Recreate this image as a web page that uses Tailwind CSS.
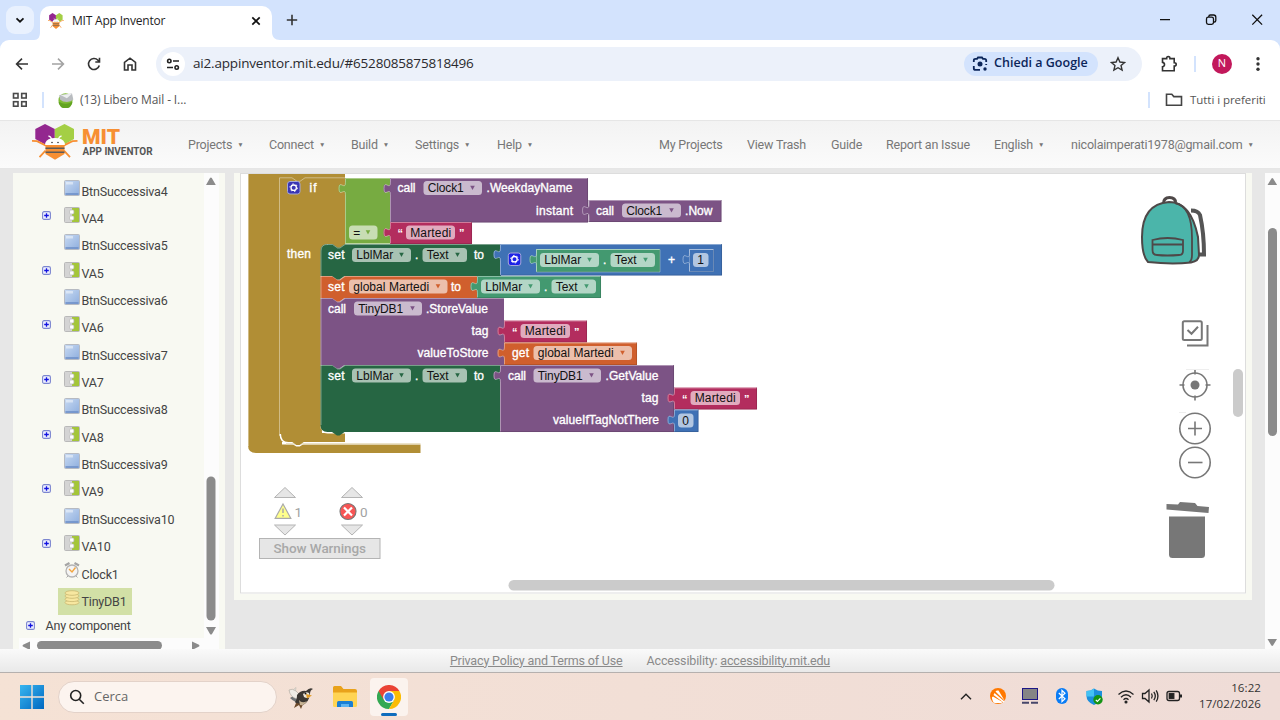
<!DOCTYPE html>
<html lang="it">
<head>
<meta charset="utf-8">
<title>MIT App Inventor</title>
<script src="https://cdn.jsdelivr.net/npm/@tailwindcss/browser@4"></script>
</head>
<body class="h-[720px] w-[1280px] overflow-hidden bg-white">
<div class="flex h-[720px] w-[1280px] flex-col overflow-hidden font-['Open_Sans','Noto_Sans',sans-serif]">

  <!-- Tab strip -->
  <div class="flex h-10 shrink-0 items-end bg-[#d3e3fd]">
    <div class="mb-1.5 ml-1.5 flex h-7 w-7 items-center justify-center rounded-[9px] bg-[#e9f1fe]">
      <svg class="h-3 w-3" viewBox="0 0 12 12" fill="none" stroke="#111" stroke-width="1.7"><path d="M2.5 4.3 6 7.7l3.5-3.4"/></svg>
    </div>
    <svg class="h-2 w-1.5 shrink-0" viewBox="0 0 6 8"><path d="M6 0v8H0c4 0 6-3 6-8z" fill="#fff"/></svg>
    <div class="flex h-[34px] w-[232px] items-center rounded-t-[10px] bg-white pb-[4px] pl-2">
      <svg class="h-4 w-4" viewBox="0 0 46 36" preserveAspectRatio="none"><use href="#bee"/></svg>
      <span class="ml-2 whitespace-nowrap text-[12px] tracking-[-0.2px] text-[#1f1f1f]">MIT App Inventor</span>
      <svg class="mr-[11px] ml-auto h-[10px] w-[10px]" viewBox="0 0 10 10" stroke="#111" stroke-width="1.7"><path d="M1.3 1.3l7.4 7.4M8.7 1.3 1.3 8.7"/></svg>
    </div>
    <svg class="h-2 w-2 shrink-0" viewBox="0 0 8 8"><path d="M0 0v8h8C3 8 0 5 0 0z" fill="#fff"/></svg>
    <svg class="mb-[14px] ml-[6px] h-3 w-3" viewBox="0 0 12 12" stroke="#333" stroke-width="1.6"><path d="M6 .8v10.4M.8 6h10.4"/></svg>
    <svg class="mr-[15px] mb-[13px] ml-auto h-[14px] w-[106px]" viewBox="1159 13 106 14" fill="none" stroke="#111" stroke-width="1.3"><path d="M1160 19.6h10M1252.300 14.800l9.800 9.800M1262.100 14.800l-9.800 9.800"/><rect x="1206.500" y="17.200" width="7" height="7.200" rx="1.800"/><path d="M1208.800 17v-.4q0-1.600 1.600-1.600h3.200q2.200 0 2.200 2.200v3.200q0 1.600-1.600 1.600h-.4"/></svg>
  </div>

  <!-- Toolbar -->
  <div class="bg-[#d3e3fd]">
  <div class="flex h-[47px] items-center rounded-t-[9px] bg-white">
    <svg class="ml-[15px] h-4 w-[14px]" viewBox="0 0 14 16" fill="none" stroke="#333" stroke-width="1.6"><path d="M13 8H2M7 2.600 1.600 8 7 13.400"/></svg>
    <svg class="ml-[22px] h-4 w-[14px]" viewBox="0 0 14 16" fill="none" stroke="#a3a3a3" stroke-width="1.6"><path d="M1 8h11M7 2.600 12.400 8 7 13.400"/></svg>
    <svg class="ml-[22px] h-4 w-[14px]" viewBox="0 0 14 16" fill="none" stroke="#333" stroke-width="1.6"><path d="M12.300 9.500A5.500 5.500 0 1 1 11 4.200l1.300 1.400M12.500 1.800v4.200H8.300"/></svg>
    <svg class="ml-[22px] h-4 w-[14px]" viewBox="0 0 14 16" fill="none" stroke="#333" stroke-width="1.6"><path d="M1.500 6.300 7 2.200l5.500 4.100V14H9V9H5v5H1.500z"/></svg>
    <div class="ml-[19px] flex h-[34px] w-[986px] items-center rounded-full bg-[#ecf1fa] pl-[5px]">
      <div class="flex h-6 w-6 items-center justify-center rounded-full bg-white">
        <svg class="h-3.5 w-3.5" viewBox="0 0 14 14" fill="none" stroke="#222" stroke-width="1.6"><circle cx="3.300" cy="4" r="1.700"/><path d="M7 4h6M1 10.500h6"/><circle cx="10.700" cy="10.500" r="1.700"/></svg>
      </div>
      <span class="ml-2 pb-px whitespace-nowrap text-[13.5px] tracking-[-0.18px] text-[#2a2a2e]">ai2.appinventor.mit.edu/#6528085875818496</span>
      <div class="ml-auto flex h-6 w-[134px] items-center rounded-full bg-[#d3e3fd] pl-2">
        <svg class="h-4 w-4" viewBox="0 0 16 16" fill="none" stroke="#0b2559" stroke-width="1.800"><path d="M1.800 6V4.500q0-1.700 1.700-1.700h1.600L6 1.500h4l.9 1.300h1.600q1.700 0 1.700 1.700V6M1.800 10v2.200q0 1.700 1.700 1.700H8M14.200 8v1"/><circle cx="8" cy="8" r="2.500" fill="#0b2559" stroke="none"/><circle cx="13" cy="13" r="1.700" fill="#0b2559" stroke="none"/></svg>
        <span class="ml-[6px] whitespace-nowrap text-[12.5px] font-semibold tracking-[0.02px] text-[#0b2559]">Chiedi a Google</span>
      </div>
      <svg class="mr-4 ml-3 h-4 w-4 shrink-0" viewBox="0 0 16 16" fill="none" stroke="#333" stroke-width="1.400"><path d="M8 1.700l1.900 4.300 4.700.45-3.550 3.100 1.050 4.600L8 11.700l-4.100 2.450 1.050-4.600L1.400 6.450 6.100 6z"/></svg>
    </div>
    <svg class="ml-[18px] h-[18px] w-[18px]" viewBox="0 0 18 18" fill="none" stroke="#333" stroke-width="1.600"><path d="M2.500 3.600h4.200q-.2-2 1.600-2t1.600 2h4.300v4.200q2 0 2 1.600t-2 1.600V15.800H2.500V11.800q2-.2 2-2.200t-2-2.200z"/></svg>
    <div class="ml-4 h-4 w-[2px] bg-[#d3e3fd]"></div>
    <div class="ml-[16px] flex h-5 w-5 items-center justify-center rounded-full bg-[#c2185b] text-[11px] text-white">N</div>
    <svg class="ml-[24px] h-4 w-1 " viewBox="0 0 4 16" fill="#333"><circle cx="2" cy="2.700" r="1.700"/><circle cx="2" cy="8" r="1.700"/><circle cx="2" cy="13.300" r="1.700"/></svg>
  </div>
  </div>

  <!-- Bookmarks -->
  <div class="flex h-[33px] shrink-0 items-center bg-white pb-[7px] text-[12px] text-[#555]">
    <svg class="ml-3 h-4 w-4" viewBox="0 0 16 16" fill="none" stroke="#4a4a4a" stroke-width="1.600"><rect x="1.500" y="1.500" width="4.500" height="4.500"/><rect x="9.700" y="1.500" width="4.500" height="4.500"/><rect x="1.500" y="9.700" width="4.500" height="4.500"/><rect x="9.700" y="9.700" width="4.500" height="4.500"/></svg>
    <div class="ml-[14px] h-4 w-[2px] bg-[#d3e3fd]"></div>
    <svg class="ml-[14px] h-4 w-4" viewBox="0 0 16 16"><circle cx="7.500" cy="8.300" r="7" fill="#7fbb35"/><path d="M.5 9.500q7 4.500 14 0A7 7 0 0 1 .5 9.500z" fill="#62a420"/><path d="M1.300 3 14 1.500 15.300 7.500Q12 11 5 9.500L2 7.500z" fill="#b9bcc0"/><path d="m2.500 3 6.400 3.300L14 1.700z" fill="#eceef0"/></svg>
    <span class="ml-[6px] whitespace-nowrap text-[12px] tracking-[-0.12px]">(13) Libero Mail - I...</span>
    <div class="ml-auto h-4 w-[2px] bg-[#d3e3fd]"></div>
    <svg class="ml-[15px] h-4 w-[18px]" viewBox="0 0 18 16" fill="none" stroke="#444" stroke-width="1.600"><path d="M1.500 13.300V2.300h5.300l2 2.300h7.700v8.700z"/></svg>
    <span class="mr-[14px] ml-[7px] w-[76px] whitespace-nowrap text-[11.5px] tracking-[-0.05px]">Tutti i preferiti</span>
  </div>

  <!-- App Inventor header -->
  <div class="flex h-[49px] shrink-0 items-center border-t border-b border-[#e6e6e6] bg-linear-to-b from-[#f3f3f3] to-[#fbfbfb] font-[Roboto,sans-serif] text-[12.5px] tracking-[-0.2px] whitespace-nowrap text-[#777]">
    <svg class="mb-1.5 ml-8 h-9 w-[46px] shrink-0" viewBox="0 0 46 36">
      <g id="bee">
        <path d="M3.300 5 13 0l9.800 5v10L13 20.500 3.300 15z" fill="#93278f"/>
        <path d="M22.800 5 32.500 0l9.500 5v10l-9.500 5.500L22.800 15z" fill="#a4cf45"/>
        <path d="M0 16.800l5 .3 9 4.500M45.500 16.800l-5 .3-9 4.500M7.500 33.200l6-6.500M38 33.200l-6-6.500" fill="none" stroke="#f78f33" stroke-width="1.800"/>
        <path d="M13.500 20H32.500V30L23 35.800 13.500 30z" fill="#f78f33"/>
        <path d="M13.200 21V19q2-5 9.800-5t9.800 5v2z" fill="#fff"/>
        <path d="M19.500 15q-.5-2.500-3-3M26.500 15q.5-2.500 3-3" fill="none" stroke="#fff" stroke-width="1.300"/>
        <circle cx="20" cy="18.500" r=".8" fill="#333"/><circle cx="26" cy="18.500" r=".8" fill="#333"/>
        <path d="M13.500 24.200h19M13.500 28.300h19" stroke="#5b5b5b" stroke-width="1.500"/>
      </g>
    </svg>
    <svg class="ml-[4px] h-[44px] w-[74px] shrink-0 overflow-visible" viewBox="82 122 74 44" font-family="Roboto" font-weight="700" letter-spacing="0"><text x="82" y="142.500" font-size="20" font-weight="900" fill="#f78f33" textLength="38" lengthAdjust="spacingAndGlyphs">MIT</text><text x="82.500" y="154" font-size="10.300" fill="#555" textLength="70" lengthAdjust="spacingAndGlyphs">APP INVENTOR</text></svg>
    <div class="ml-[32px] flex pt-[2px]">
      <span class="flex w-[81px] items-center gap-[5px]">Projects <i class="text-[6.5px] not-italic">▼</i></span>
      <span class="flex w-[82px] items-center gap-[5px]">Connect <i class="text-[6.5px] not-italic">▼</i></span>
      <span class="flex w-[64px] items-center gap-[5px]">Build <i class="text-[6.5px] not-italic">▼</i></span>
      <span class="flex w-[82px] items-center gap-[5px]">Settings <i class="text-[6.5px] not-italic">▼</i></span>
      <span class="flex w-[162px] items-center gap-[5px]">Help <i class="text-[6.5px] not-italic">▼</i></span>
      <span class="w-[88px]">My Projects</span>
      <span class="w-[84px]">View Trash</span>
      <span class="w-[55px]">Guide</span>
      <span class="w-[108px]">Report an Issue</span>
      <span class="flex w-[77px] items-center gap-[5px]">English <i class="text-[6.5px] not-italic">▼</i></span>
      <span class="flex items-center gap-[5px]">nicolaimperati1978@gmail.com <i class="text-[6.5px] not-italic">▼</i></span>
    </div>
  </div>

  <!-- Work area -->
  <div class="flex h-[480px] shrink-0 overflow-hidden bg-[#e7e7e7] pt-1">
    <!-- Component tree -->
    <div class="ml-[13px] flex h-[476px] w-[212px] shrink-0 flex-col bg-[#f8f9f2]">
      <div class="flex h-[465px] shrink-0">
        <div class="h-[465px] w-[191px] overflow-hidden pt-[4.400px] font-[Roboto,sans-serif] text-[12.5px] text-[#444]">
          <div id="tree"></div>
          <div class="flex h-[22px] items-center pl-[13px]"><svg class="h-[9px] w-[9px]" viewBox="0 0 9 9"><use href="#plus"/></svg><span class="ml-[10.500px] tracking-[-0.18px]">Any component</span></div>
        </div>
        <svg class="h-[465px] w-[15px] bg-[#fcfcfc]" viewBox="204 173 15 465" fill="#8b8b8b"><path d="M206 185l4-7q.9-1 1.800 0l4 7zM206 627h10l-4 7q-1 1-2 0z"/><rect x="206.500" y="476.500" width="9" height="144" rx="4.500"/></svg>
      </div>
      <svg class="ml-1.5 h-[11px] w-[200px] shrink-0 bg-[#fcfcfc]" viewBox="19 638 200 11" fill="#8b8b8b"><path d="M30 641.500v8.500l-7-3.400q-.8-.9 0-1.800zM192 641.500v8.500l7-3.400q.8-.9 0-1.800z"/><rect x="37" y="641" width="125" height="9" rx="4.500"/></svg>
    </div>
    <!-- Blocks workspace -->
    <div class="ml-[9px] h-[427px] w-[1018px] shrink-0 bg-[#f8f9f2] pl-[6px]">
      <svg id="ws" class="h-[421px] w-[1006px] bg-white" viewBox="240 173 1006 421" font-family="Liberation Sans"></svg>
    </div>
    <!-- Page scrollbar -->
    <svg class="ml-auto h-[476px] w-[15px] bg-[#fcfcfc]" viewBox="1265 173 15 476" fill="#8b8b8b"><path d="M1267.500 185l4-6.500q.8-.9 1.600 0l4 6.500zM1267.500 639h9.500l-4 6.500q-.8.900-1.600 0z"/><rect x="1268" y="228" width="9" height="208" rx="4.500"/></svg>
  </div>

  <!-- Footer -->
  <div class="flex h-[24px] shrink-0 items-center justify-center gap-6 border-b border-[#b5b0ae] bg-linear-to-b from-[#fafafa] to-[#e9e9e9] pt-px font-[Roboto,sans-serif] text-[12.5px] tracking-[-0.16px] text-[#8a8a8a]">
    <span class="underline">Privacy Policy and Terms of Use</span>
    <span>Accessibility: <span class="underline">accessibility.mit.edu</span></span>
  </div>

  <!-- Taskbar -->
  <div class="flex h-[47px] shrink-0 items-center bg-linear-to-r from-[#f5e2d5] to-[#efdcd7] text-[#333]">
    <svg class="ml-5 h-6 w-6" viewBox="0 0 24 24"><defs><linearGradient id="win" x1="0" y1="0" x2="1" y2="1"><stop offset="0" stop-color="#38b6f0"/><stop offset="1" stop-color="#0067c0"/></linearGradient></defs><path d="M0 0h11.300v11.300H0zM12.700 0H24v11.300H12.700zM0 12.700h11.300V24H0zM12.700 12.700H24V24H12.700z" fill="url(#win)"/></svg>
    <div class="ml-[14px] flex h-8 w-[219px] items-center rounded-full border border-[#e3d2c9] bg-[#fcf4ef] pl-[10px]">
      <svg class="h-4 w-4" viewBox="0 0 16 16" fill="none" stroke="#222" stroke-width="1.600"><circle cx="6.700" cy="6.500" r="5"/><path d="m10.200 10.200 4.600 4.600"/></svg>
      <span class="ml-[9px] text-[13px] text-[#666]">Cerca</span>
    </div>
    <svg class="ml-[10px] h-7 w-7" viewBox="0 0 28 28"><path d="M12 14q-6-2-9 1 5 5 11 5z" fill="#6f7477"/><path d="M9 13Q4 7 9 4.500q-2 6 5 7z" fill="#f4f2ee" stroke="#b7b1a8" stroke-width=".6"/><path d="M2 7q3-2 7 1l4 4-3 4Q3 14 2 7z" fill="#efece6" stroke="#aaa399" stroke-width=".6"/><path d="M10 12q4-5 9-4 4-4 7-2-3 1-3 5-1 8-7 11-5 1-8-3 2-2 2-7z" fill="#3a3632"/><path d="M16 11q3-3 6-1l1 4q-3 2-6 0z" fill="#eee6d8"/><path d="m19 11 6 1.500-5 3z" fill="#e09a25"/><circle cx="18.500" cy="10.500" r="1" fill="#111"/><path d="m9 20-2 5 5-3 2 4 2-5z" fill="#6d4a2a"/><path d="M12 17q3 4 8 1-3 5-7 4z" fill="#c7b394"/></svg>
    <svg class="ml-[17px] h-6 w-[26px]" viewBox="0 0 26 24"><path d="M1 2.500Q1 1 2.500 1H9l2.500 3H23q2 0 2 2v14H1z" fill="#e9a21b"/><path d="M1 7.500h24v13q0 1.500-1.500 1.500h-21Q1 22 1 20.500z" fill="#ffd454"/><path d="M5 17.500q0-1.500 1.500-1.500h13q1.500 0 1.500 1.500V22H5z" fill="#1a7fd4"/><path d="M9 19h8v3H9z" fill="#5db4f0"/></svg>
    <div class="relative ml-[12px] flex h-[38px] w-[38px] items-center justify-center rounded-[4px] bg-[#fbf3ee]">
      <svg class="h-6 w-6" viewBox="0 0 24 24"><path d="M12 12 1.600 6a12 12 0 0 0 10.400 18l5.200-9z" fill="#34a853"/><path d="M12 12V6h10.400A12 12 0 0 1 12 24l5.200-9z" fill="#fbbc05"/><path d="M12 12 6.800 15 1.600 6A12 12 0 0 1 22.400 6H12z" fill="#ea4335"/><circle cx="12" cy="12" r="5.900" fill="#fff"/><circle cx="12" cy="12" r="4.600" fill="#3b7ded"/></svg>
      <div class="absolute bottom-0 h-[3px] w-4 rounded-full bg-[#0f6cbd]"></div>
    </div>
    <svg class="mb-px ml-auto h-6 w-[224px]" viewBox="960 684 224 24" fill="none"><path d="m961 699.200 5-5 5 5" stroke="#222" stroke-width="1.400"/>
      <circle cx="998" cy="696" r="8" fill="#ff7800"/><path d="M992 698.500q-.5-1.500 1-2l9.500 5.500-1 1h-6.500q-2 0-3-4.500zM993.500 695l1-2 10 8.500-1 1zM995.500 691.500q1-1.500 3-1l6 10z" fill="#fff"/>
      <rect x="1022.500" y="688.500" width="15" height="11" fill="#858585" stroke="#1d1786" stroke-width="1"/><path d="M1022 702.700h7M1031 702.700h7" stroke="#46466a" stroke-width="2"/>
      <rect x="1056" y="688" width="12" height="16" rx="6" fill="#0a7cf5"/><path d="m1058.800 693 6.200 5.800-3 2.800v-11.200l3 2.800-6.200 5.800" stroke="#fff" stroke-width="1.200"/>
      <path d="M1094 688.500q3.500 2.500 8 2.500v5q0 6-8 9-7.500-3-7.500-9v-5q4.500 0 7.500-2.500z" fill="#1c8fdc"/><path d="M1094 688.500v8h-7.500V691q4.500 0 7.500-2.500z" fill="#43c2f3"/><circle cx="1098" cy="699.700" r="4.700" fill="#149414"/><path d="m1095.800 699.800 1.600 1.600 3-3" stroke="#fff" stroke-width="1.200"/>
      <g stroke="#222" stroke-width="1.300"><path d="M1118.500 694.500q7.500-7 15 0M1121 697.200q5-5 10 0M1123.500 699.700q2.500-2.500 5 0"/><circle cx="1126" cy="702" r=".9" fill="#222"/><path d="M1142.500 693.500h2.500l4-3.500v12l-4-3.500h-2.500zM1151.500 693.500q1.500 2.500 0 5M1153.800 691.800q3 4.200 0 8.400M1156.200 690.300q3.500 5.700 0 11.400"/><rect x="1167" y="691.500" width="12.500" height="9" rx="2"/><rect x="1169.300" y="693.700" width="4.500" height="4.600" fill="#222"/><path d="M1181 694.500v3" stroke-width="2"/></g>
    </svg>
    <div class="mr-[19px] mb-[2px] ml-[11px] w-[66px] text-right text-[11.500px] leading-4 tracking-[0.1px] whitespace-nowrap">16:22<br>17/02/2026</div>
  </div>
</div>

<svg class="absolute h-0 w-0">
  <defs>
    <linearGradient id="btnFill" x1="0" y1="0" x2="1" y2="1"><stop offset="0" stop-color="#c8daf2"/><stop offset="1" stop-color="#8eaede"/></linearGradient>
    <g id="plus"><rect x=".6" y=".6" width="7.800" height="7.800" rx="1.500" fill="#eef0ff" stroke="#7c86cf" stroke-width="1.100"/><path d="M4.500 2.200v4.600M2.200 4.500h4.600" stroke="#1212e0" stroke-width="1.300"/></g>
    <g id="btn"><rect x=".5" y=".5" width="15" height="15" rx="1" fill="url(#btnFill)" stroke="#b6bac2"/><path d="M1.500 14h13" stroke="#6f90c8" stroke-width="1.600"/><path d="M2 2h7v2.500H2z" fill="#fff" opacity=".45"/></g>
    <g id="va"><rect x=".5" y=".5" width="15" height="15" rx="1" fill="#d4d4d4" stroke="#b9b9b9"/><path d="M8 1h7v14H8z" fill="#a4c639"/><rect x="5.600" y="3" width="4.300" height="4" rx="1" fill="#fff" stroke="#b9b9b9" stroke-width=".7"/><rect x="5.600" y="9" width="4.300" height="4" rx="1" fill="#fff" stroke="#b9b9b9" stroke-width=".7"/></g>
    <g id="clock"><path d="M1 3.500 5.500 1M15 3.500 10.500 1" stroke="#a5a5a5" stroke-width="2.200"/><path d="m4 14-1.500 1.500M12 14l1.500 1.500" stroke="#aaa"/><circle cx="8" cy="9" r="6" fill="#f4f4f4" stroke="#b3b3b3" stroke-width="1.300"/><path d="m5 7 3 3 3.500-4.500" fill="none" stroke="#f2a640" stroke-width="1.400"/></g>
    <g id="db" fill="#f7e7a0" stroke="#c9b871" stroke-width=".8"><ellipse cx="8" cy="12.500" rx="7" ry="2.300"/><ellipse cx="8" cy="9.300" rx="7" ry="2.300"/><ellipse cx="8" cy="6" rx="7" ry="2.300"/><ellipse cx="8" cy="3" rx="7" ry="2.300"/></g>
  </defs>
</svg>

<script>
// Component tree
const tree = [];
for (let n = 4; n <= 10; n++) tree.push(['btn', 'BtnSuccessiva' + n], ['va', 'VA' + n]);
tree.push(['clock', 'Clock1'], ['db', 'TinyDB1']);
document.getElementById('tree').innerHTML = tree.map(([icon, label]) => `
  <div class="flex h-[27.350px] items-center pl-[29px]">
    <svg class="mb-[6px] h-[9px] w-[9px]" viewBox="0 0 9 9">${icon === 'va' ? '<use href="#plus"/>' : ''}</svg>
    <div class="${icon === 'db' ? 'ml-[7px] flex h-[27px] items-center bg-[#d2e0a6] pr-[5px] pl-[6px]' : 'ml-[7px] flex h-[27px] items-center pl-[6px]'}">
      <svg class="mb-[7px] h-4 w-4" viewBox="0 0 16 16"><use href="#${icon}"/></svg>
      <span class="ml-[1.500px] pt-[2px] tracking-[-0.18px] whitespace-nowrap">${label}</span>
    </div>
  </div>`).join('');

// Blocks
const GOLD = '#b18e35', LOGIC = '#77ab41', PURPLE = '#7c5385', PINK = '#b32d5e', DKGREEN = '#266643', BLUE = '#3f71b5', GREEN = '#439970', ORANGE = '#d05f2d';
const out = [];
const path = (d, fill, stroke = 'none', w = 1) => out.push(`<path d="${d}" fill="${fill}" stroke="${stroke}" stroke-width="${w}"/>`);
const light = 'rgba(255,255,255,.38)';
const tabUp = 'c0-8-6.500 3.500-6.500-6s6.500 2.500 6.500-6';
// value block with a puzzle tab on its left edge
function value(x, y, x2, y2, c) {
  path(`M${x} ${y}H${x2}V${y2}H${x}V${y + 16.5}${tabUp}z`, c);
  path(`M${x + .5} ${y2 - .5}V${y + 16.5}${tabUp}V${y + .5}H${x2 - .5}`, 'none', light);
  path(`M${x} ${y2 - .4}H${x2 - .4}V${y}`, 'none', 'rgba(0,0,0,.18)', .8);
}
// statement block, notch on the top edge and tooth underneath
function stmt(x, y, x2, y2, c, r = '', rb = 0) {
  path(`M${x} ${y + (r || 0)}${r ? `q0-${r} ${r}-${r}` : ''}H${x + 12}l5 3.500h2.500l5-3.500H${x2}V${y2}H${x + 24}l-5 3.500h-2.500l-5-3.500H${x + rb}${rb ? `q-${rb} 0-${rb}-${rb}` : ''}z`, c);
  path(`M${x + .5} ${y2 - rb}V${y + (r || 0)}${r ? `q0-${r} ${r}-${r - .5}` : ''}M${x + (r || 0)} ${y + .5}H${x + 12}l5 3.500h2.500l5-3.500H${x2}`, 'none', light);
}
function label(s, x, y, w) {
  out.push(`<text x="${x}" y="${y}" font-size="12" fill="#fff" stroke="#fff" stroke-width=".35" textLength="${w}">${s}</text>`);
}
function field(s, x, cy, x2, tw, arrow) {
  out.push(`<rect x="${x}" y="${cy - 7}" width="${x2 - x}" height="14" rx="3.500" fill="#fff" opacity=".6"/><text x="${x + 4.2}" y="${cy + 4}" font-size="12" fill="#111" textLength="${tw}">${s}</text>`);
  if (arrow) path(`M${x2 - 11.800} ${cy - 2.300}h4.600l-2.300 4.200z`, arrow);
}
function gear(x, y, c) {
  out.push(`<rect x="${x - 6}" y="${y - 6}" width="12.500" height="12.500" rx="2.500" fill="${c}" stroke="#a5a8d8" stroke-width="1"/><circle cx="${x + .2}" cy="${y + .2}" r="2.700" fill="none" stroke="#fff" stroke-width="1.300"/><circle cx="${x + .2}" cy="${y + .2}" r="3.800" fill="none" stroke="#fff" stroke-width="1" stroke-dasharray="1.500 2.479"/>`);
}
const quote = (x, y, ch) => out.push(`<text x="${x}" y="${y + 4}" font-size="11" fill="#fff" font-weight="700">${ch}</text>`);
function text(x, y) { value(x, y, x + 83, y + 22, PINK); quote(x + 8, y + 11, '“'); field('Martedi', x + 16.5, y + 10.500, x + 66, 41); quote(x + 70, y + 11, '”'); }

// event and if/then containers
path('M248 173H345V250H322V433H345V442H282V444.500H420.500V453H256q-8 0-8-8z', GOLD);
path('M320.500 425V426q0 7.500 7 7.500H345V432H322z', '#fff');
path('M280.300 434q0 8.700 8 8.700H291.500l5 3h3l5-3H345', 'none', '#fff', 1.500);
path('M286 443.900H420.500', 'none', '#e4d8b6', 1.200);
path('M296 442h4l4.500-.5-5 3.500h-3l-5-3.500z', GOLD);
path('M248.500 173V446M279.500 436V177.800H292l5 3.500h3l5-3.500H345', 'none', 'rgba(255,255,255,.4)', 1);

path('M345 178H390V243.500H345V194.500' + tabUp + 'z', LOGIC);
path('M345.500 243V194.500' + tabUp + 'V178.500H390', 'none', light);
value(390, 178, 588, 222.500, PURPLE);
value(588.500, 200, 721.500, 222, PURPLE);
value(390, 222, 472, 244, PINK);
quote(397.500, 233, '“'); field('Martedi', 406, 232.500, 455, 41); quote(459, 233, '”');
gear(293.500, 187.500, '#3a36b4'); label('if', 309.500, 192, 7); label('then', 287, 258, 24);
label('call', 397.500, 192, 18); field('Clock1', 423.500, 188, 482, 36, PURPLE); label('.WeekdayName', 486.500, 192, 86);
label('instant', 536, 214.500, 37); label('call', 596, 214.500, 18); field('Clock1', 622, 210.500, 681, 36, PURPLE); label('.Now', 685, 214.500, 27.500);
field('=', 349, 232.500, 377.500, 7, LOGIC);

stmt(320.5, 365, 501, 432, DKGREEN, '', 7);
stmt(320.5, 298, 504, 365, PURPLE);
stmt(320.5, 276, 478, 298, ORANGE);
stmt(320.5, 244, 501, 276, DKGREEN, 7);

value(500, 244, 722, 275.500, BLUE);
gear(514.300, 259, '#1c22e6');
value(536, 249, 660, 272, GREEN);
path('M536.500 249.500H660V272H536.500z', 'none', 'rgba(200,230,220,.45)');
field('LblMar', 540, 260, 599, 37, GREEN); label('.', 603, 264, 3); field('Text', 610.500, 260, 655, 22, GREEN);
label('+', 668, 263.500, 7);
value(689, 249, 714, 272, BLUE); path('M689.500 249.500H713.500V271.500H689.500z', 'none', 'rgba(255,255,255,.25)');
field('1', 693, 260, 708.500, 7);
label('set', 328, 258.500, 16.500); field('LblMar', 352, 255, 411, 37, DKGREEN); label('.', 415, 259, 3); field('Text', 422.500, 255, 467, 22, DKGREEN); label('to', 474, 258.500, 10);

value(477, 276, 601, 298, GREEN);
label('set', 328, 290.500, 16.500); field('global Martedi', 349, 286.500, 447.500, 76, ORANGE); label('to', 451, 290.500, 10);
field('LblMar', 481, 286.500, 540, 37, GREEN); label('.', 544, 290.500, 3); field('Text', 551.500, 286.500, 596, 22, GREEN);

label('call', 328, 312.500, 18); field('TinyDB1', 354, 308.500, 422, 45, PURPLE); label('.StoreValue', 426, 312.500, 62);
label('tag', 471.500, 335, 17); label('valueToStore', 417.500, 357, 71);
text(504, 320.500);
value(504, 342.500, 637, 365, ORANGE);
label('get', 512, 357, 17); field('global Martedi', 533.500, 353, 632, 76, ORANGE);

value(500, 365, 674, 432, PURPLE);
label('set', 328, 379.500, 16.500); field('LblMar', 352, 375.500, 411, 37, DKGREEN); label('.', 415, 379.500, 3); field('Text', 422.500, 375.500, 467, 22, DKGREEN); label('to', 474, 379.500, 10);
label('call', 508, 379.500, 18); field('TinyDB1', 533.500, 375.500, 601, 45, PURPLE); label('.GetValue', 605.500, 379.500, 53);
label('tag', 641.500, 402, 17); label('valueIfTagNotThere', 553, 424, 106);
text(674, 387.500);
value(674, 409.500, 698.500, 432, BLUE); field('0', 678, 420.500, 693.500, 7);

// Warning indicators
path('M274.500 497.500 285 487.500l10.500 10zM341.500 497.500 352 487.500l10.500 10zM274.500 525 285 535l10.500-10zM341.500 525 352 535l10.500-10z', '#e6e6e6', '#b4b4b4');
path('M283 504 290.800 518.300H275.200z', '#ffff8c', '#aaa', 1.200); path('M283 508.500v4.500M283 515v1.500', 'none', '#aaa', 1.500);
out.push('<circle cx="348" cy="511.500" r="8" fill="#f75555" stroke="#777" stroke-width="1.100"/>'); path('M344 507.500l8 8M352 507.500l-8 8', 'none', '#fff', 2.200);
out.push('<g font-family="Roboto" font-size="13.500" fill="#a2a2a2"><text x="294.500" y="517">1</text><text x="360" y="517">0</text></g><rect x="259.500" y="538.500" width="120.500" height="20" fill="#e6e6e6" stroke="#b4b4b4"/><text x="273.500" y="553.300" font-family="Roboto" font-size="13.500" font-weight="500" fill="#a8a8a8" textLength="92.500">Show Warnings</text>');

// Backpack
path('M1191 210.500q7 0 9 4.500 4 18 4 39.500h-5', 'none', '#555', 4);
path('M1163.500 203.500q0-6 6-6t6 5', 'none', '#4e4848', 3);
path('M1148 262q-6-6-6-25 0-33 27-35 22 0 29 35l1 18q0 6-8 7.500-20 2-43-.500z', '#4bb5aa', '#4e4848', 2);
path('M1175 203q17 3 17 35v17q0 6-3 7M1152.500 240q15-4 30.500 0v11q0 4-4 4-12 1-22 0-4.500 0-4.500-5zM1153 244.500h30', 'none', '#4e4848', 1.800);

// Workspace controls
const G = '#777';
out.push(`<g fill="none" stroke="${G}" stroke-width="2"><rect x="1182.800" y="321.200" width="19" height="18.800" rx="1.500"/><path d="M1187.500 330l4 3.800 6.500-7M1207.500 325v20.500H1187"/><g stroke-width="1.600"><circle cx="1195" cy="385" r="12"/><path d="M1195 369.500v5M1195 395.500v5M1179.500 385h5M1205.500 385h5"/><circle cx="1195" cy="428.500" r="15.200"/><path d="M1188 428.500h14M1195 421.500v14"/><circle cx="1195" cy="462.500" r="15.200"/><path d="M1188 462.500h14.500"/></g></g><circle cx="1195" cy="385" r="4.500" fill="${G}"/>`);
path('M1186 369.500h23M1179 412.500h7', 'none', '#eee');
path('M1166.500 504l11.500.5 2-2.500 15 1 2.500 3 11.500 1-.5 6-42-3.500zM1169 516.500h36v38q0 3.500-3.500 3.500h-29q-3.500 0-3.500-3.500z', G);
out.push('<rect x="1233" y="369" width="10" height="48" rx="5" fill="#cbcbcb"/><rect x="508.500" y="580" width="546" height="10.500" rx="5.200" fill="#cbcbcb"/><rect x="240.500" y="173.500" width="1005" height="419.500" fill="none" stroke="#ddd"/>');
document.getElementById('ws').innerHTML = out.join('');
</script>
</body>
</html>
